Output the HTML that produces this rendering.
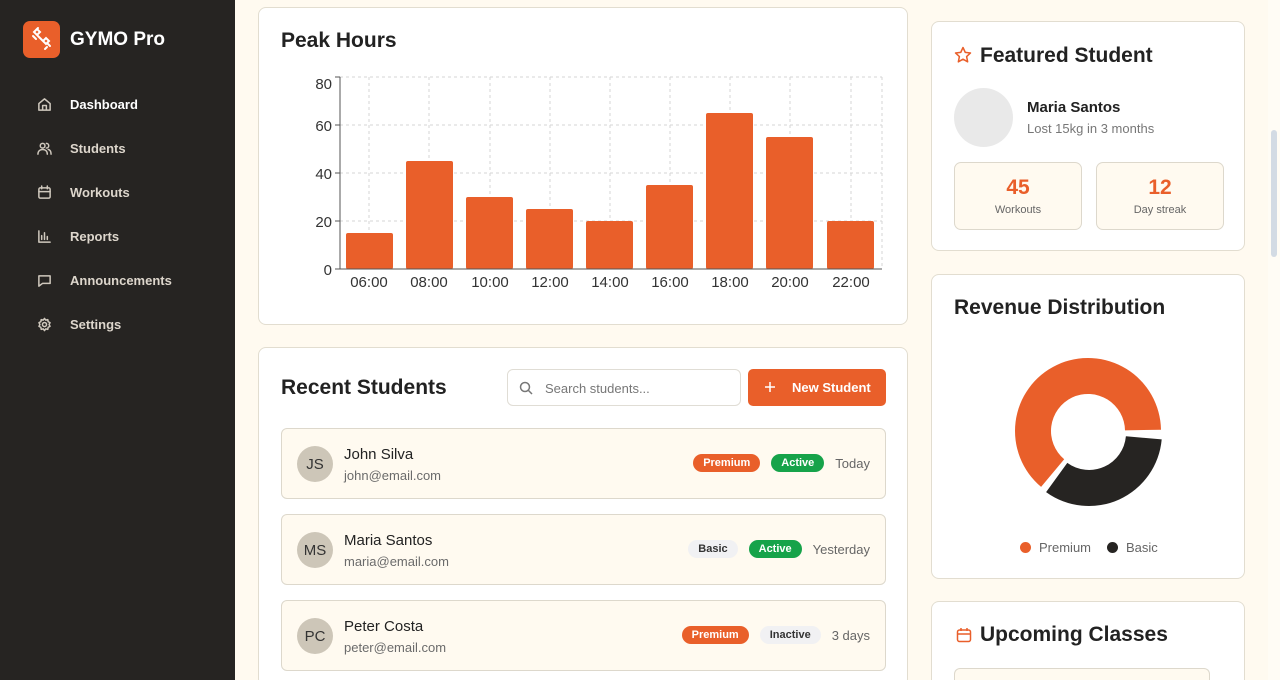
<!DOCTYPE html>
<html style="width:1280px;height:680px;overflow:hidden"><head><meta charset="utf-8"><style>
*{box-sizing:border-box;margin:0;padding:0}
body{width:1280px;height:680px;overflow:hidden;background:#fffaf0;font-family:"Liberation Sans",sans-serif;color:#222;position:relative}
.abs{position:absolute}
.side{left:0;top:0;width:235px;height:680px;background:#262422}
.logo{left:23px;top:21px;width:37px;height:37px;border-radius:7px;background:#e95f2a}
.brand{left:70px;top:29px;color:#fff;font-weight:bold;font-size:19px}
.nav{left:37px;color:#ddd6cc;font-size:13px;font-weight:bold;display:flex;align-items:center}
.nav svg{width:15px;height:15px;margin-right:18px;fill:none;stroke:#cfc8bd;stroke-width:1.6;stroke-linecap:round;stroke-linejoin:round}
.card{background:#fff;border:1px solid #e2ddd0;border-radius:8px}
.h{font-weight:bold;font-size:21px;color:#222}
.row{left:281px;width:605px;height:71px;background:#fffaf0;border:1px solid #ddd8cc;border-radius:6px}
.av{left:15px;top:17px;width:36px;height:36px;border-radius:50%;background:#cdc6b8;color:#333;font-size:15px;display:flex;align-items:center;justify-content:center}
.nm{left:62px;top:17px;font-size:15px;color:#222}
.em{left:62px;top:39px;font-size:13px;color:#6b6b6b}
.right{right:15px;top:25px;display:flex;align-items:center;gap:11px;font-size:13px;color:#666}
.b{font-size:11px;font-weight:bold;padding:3px 10px;border-radius:10px}
.pr{background:#e95f2a;color:#fff}.ac{background:#16a34a;color:#fff}.gr{background:#f1f1f3;color:#333}
.stat{top:140px;width:128px;height:68px;background:#fffaf0;border:1px solid #ddd8cc;border-radius:7px;text-align:center}
.stat b{display:block;color:#e95f2a;font-size:21px;margin-top:13px}
.stat span{font-size:11px;color:#666}
</style></head><body>
<div class="abs side"></div>
<div class="abs logo"><svg width="37" height="37" viewBox="0 0 37 37" fill="none" stroke="#fff" stroke-width="2" stroke-linecap="round"><path d="M11 11l3-3 3 3-3 3zM20 20l3-3 3 3-3 3-3-3zM15 15l6 6M10 15l3 3M24 22l3 3M13 9l2-2M22 28l2-2"/></svg></div>
<div class="abs brand">GYMO Pro</div>
<div class="abs nav" style="top:97px;color:#fff"><svg viewBox="0 0 16 16"><path d="M2 7l6-5 6 5v7H2z M6 14V9h4v5"/></svg>Dashboard</div>
<div class="abs nav" style="top:141px"><svg viewBox="0 0 16 16"><circle cx="6" cy="5" r="2.5"/><path d="M1 14c0-3 2-5 5-5s5 2 5 5M10 2.5a2.5 2.5 0 010 5M12 9c2 .5 3 2.5 3 5"/></svg>Students</div>
<div class="abs nav" style="top:185px"><svg viewBox="0 0 16 16"><rect x="2" y="3" width="12" height="11" rx="1.5"/><path d="M2 7h12M5 1v3M11 1v3"/></svg>Workouts</div>
<div class="abs nav" style="top:229px"><svg viewBox="0 0 16 16"><path d="M2 2v12h12M5 11V7M8 11V4M11 11V8"/></svg>Reports</div>
<div class="abs nav" style="top:273px"><svg viewBox="0 0 16 16"><path d="M2 3h12v8H6l-4 3z"/></svg>Announcements</div>
<div class="abs nav" style="top:317px"><svg viewBox="0 0 16 16"><circle cx="8" cy="8" r="2.2"/><path d="M8 1.5l1.3 1.8 2.2-.5.4 2.2 2 1-1 2 1 2-2 1-.4 2.2-2.2-.5L8 14.5l-1.3-1.8-2.2.5-.4-2.2-2-1 1-2-1-2 2-1 .4-2.2 2.2.5z"/></svg>Settings</div>

<div class="abs card" style="left:258px;top:7px;width:650px;height:318px"></div>
<div class="abs h" style="left:281px;top:29px">Peak Hours</div>
<svg class="abs" style="left:300px;top:70px" width="590" height="230" font-family="Liberation Sans" font-size="15" fill="#333">
<g stroke="#d6d6d6" stroke-dasharray="3 3" stroke-width="1">
<path d="M40 7H582M40 55H582M40 103H582M40 151H582"/>
<path d="M69 7V199M129 7V199M190 7V199M250 7V199M310 7V199M370 7V199M430 7V199M490 7V199M551 7V199M582 7V199"/>
</g>
<g fill="#e95f2a">
<rect x="46" y="163" width="47" height="36" rx="2"/>
<rect x="106" y="91" width="47" height="108" rx="2"/>
<rect x="166" y="127" width="47" height="72" rx="2"/>
<rect x="226" y="139" width="47" height="60" rx="2"/>
<rect x="286" y="151" width="47" height="48" rx="2"/>
<rect x="346" y="115" width="47" height="84" rx="2"/>
<rect x="406" y="43" width="47" height="156" rx="2"/>
<rect x="466" y="67" width="47" height="132" rx="2"/>
<rect x="527" y="151" width="47" height="48" rx="2"/>
</g>
<path d="M40 7V199H582M35 7H40M35 55H40M35 103H40M35 151H40M35 199H40" stroke="#555" fill="none"/>
<g text-anchor="end"><text x="32" y="19">80</text><text x="32" y="61">60</text><text x="32" y="109">40</text><text x="32" y="157">20</text><text x="32" y="205">0</text></g>
<g text-anchor="middle"><text x="69" y="217">06:00</text><text x="129" y="217">08:00</text><text x="190" y="217">10:00</text><text x="250" y="217">12:00</text><text x="310" y="217">14:00</text><text x="370" y="217">16:00</text><text x="430" y="217">18:00</text><text x="490" y="217">20:00</text><text x="551" y="217">22:00</text></g>
</svg>

<div class="abs card" style="left:258px;top:347px;width:650px;height:340px"></div>
<div class="abs h" style="left:281px;top:376px">Recent Students</div>
<div class="abs" style="left:507px;top:369px;width:234px;height:37px;border:1px solid #e0ddd5;border-radius:6px;background:#fff;font-size:13px;color:#777;padding:11px 0 0 37px">Search students...
<svg class="abs" style="left:11px;top:11px" width="14" height="14" fill="none" stroke="#777" stroke-width="1.5"><circle cx="6" cy="6" r="4.5"/><path d="M9.5 9.5L13 13"/></svg></div>
<div class="abs" style="left:748px;top:369px;width:138px;height:37px;border-radius:5px;background:#e95f2a;color:#fff;font-size:13px;font-weight:bold;padding:11px 0 0 44px">New Student
<svg class="abs" style="left:16px;top:12px" width="12" height="12" stroke="#fff" stroke-width="1.5"><path d="M6 1v10M1 6h10"/></svg></div>

<div class="abs row" style="top:428px"><div class="abs av">JS</div><div class="abs nm">John Silva</div><div class="abs em">john@email.com</div>
<div class="abs right"><span class="b pr">Premium</span><span class="b ac">Active</span><span>Today</span></div></div>
<div class="abs row" style="top:514px"><div class="abs av">MS</div><div class="abs nm">Maria Santos</div><div class="abs em">maria@email.com</div>
<div class="abs right"><span class="b gr">Basic</span><span class="b ac">Active</span><span>Yesterday</span></div></div>
<div class="abs row" style="top:600px"><div class="abs av">PC</div><div class="abs nm">Peter Costa</div><div class="abs em">peter@email.com</div>
<div class="abs right"><span class="b pr">Premium</span><span class="b gr">Inactive</span><span>3 days</span></div></div>

<div class="abs card" style="left:931px;top:21px;width:314px;height:230px">
<svg class="abs" style="left:22px;top:24px" width="18" height="18" viewBox="0 0 24 24" fill="none" stroke="#e95f2a" stroke-width="2" stroke-linejoin="round"><path d="M12 2l3 6.5 7 .8-5.2 4.8 1.4 7L12 17.6 5.8 21.1l1.4-7L2 9.3l7-.8z"/></svg>
<div class="abs h" style="left:48px;top:22px">Featured Student</div>
<div class="abs" style="left:22px;top:66px;width:59px;height:59px;border-radius:50%;background:#e9e9e9"></div>
<div class="abs" style="left:95px;top:77px;font-size:15px;font-weight:bold">Maria Santos</div>
<div class="abs" style="left:95px;top:99px;font-size:13px;color:#777">Lost 15kg in 3 months</div>
<div class="abs stat" style="left:22px"><b>45</b><span>Workouts</span></div>
<div class="abs stat" style="left:164px"><b>12</b><span>Day streak</span></div>
</div>

<div class="abs card" style="left:931px;top:274px;width:314px;height:305px">
<div class="abs h" style="left:22px;top:21px">Revenue Distribution</div>
<div class="abs" style="left:88px;top:265px;font-size:13px;color:#666;display:flex;align-items:center">
<span style="width:11px;height:11px;border-radius:50%;background:#e95f2a;margin-right:8px"></span>Premium
<span style="width:11px;height:11px;border-radius:50%;background:#262422;margin:0 8px 0 16px"></span>Basic</div>
</div>
<svg class="abs" style="left:1008px;top:351px" width="160" height="160">
<g transform="translate(80,80)">
<path fill="#e95f2a" d="M-46.9 55.9A73 73 0 1 1 73 -1.3L37 -0.6A37 37 0 1 0 -23.8 28.3Z"/>
<path fill="#262422" transform="translate(1,2)" d="M72.7 6.4A73 73 0 0 1 -42.9 59.1L-21.7 29.9A37 37 0 0 0 36.9 3.2Z"/>
</g></svg>

<div class="abs card" style="left:931px;top:601px;width:314px;height:79px;border-bottom:none;border-radius:8px 8px 0 0">
<svg class="abs" style="left:24px;top:25px" width="16" height="16" viewBox="0 0 16 16" fill="none" stroke="#e95f2a" stroke-width="1.5"><rect x="1.5" y="3" width="13" height="11.5" rx="2"/><path d="M1.5 7h13M5 1v3M11 1v3"/></svg>
<div class="abs h" style="left:48px;top:21px">Upcoming Classes</div>
<div class="abs" style="left:22px;top:66px;width:256px;height:13px;background:#fffaf0;border:1px solid #ddd8cc;border-bottom:none;border-radius:6px 6px 0 0"></div>
</div>

<div class="abs" style="left:1268px;top:0;width:12px;height:680px;background:#fffcf5"></div>
<div class="abs" style="left:1271px;top:130px;width:6px;height:127px;border-radius:3px;background:#d3dbe4"></div>
</body></html>
